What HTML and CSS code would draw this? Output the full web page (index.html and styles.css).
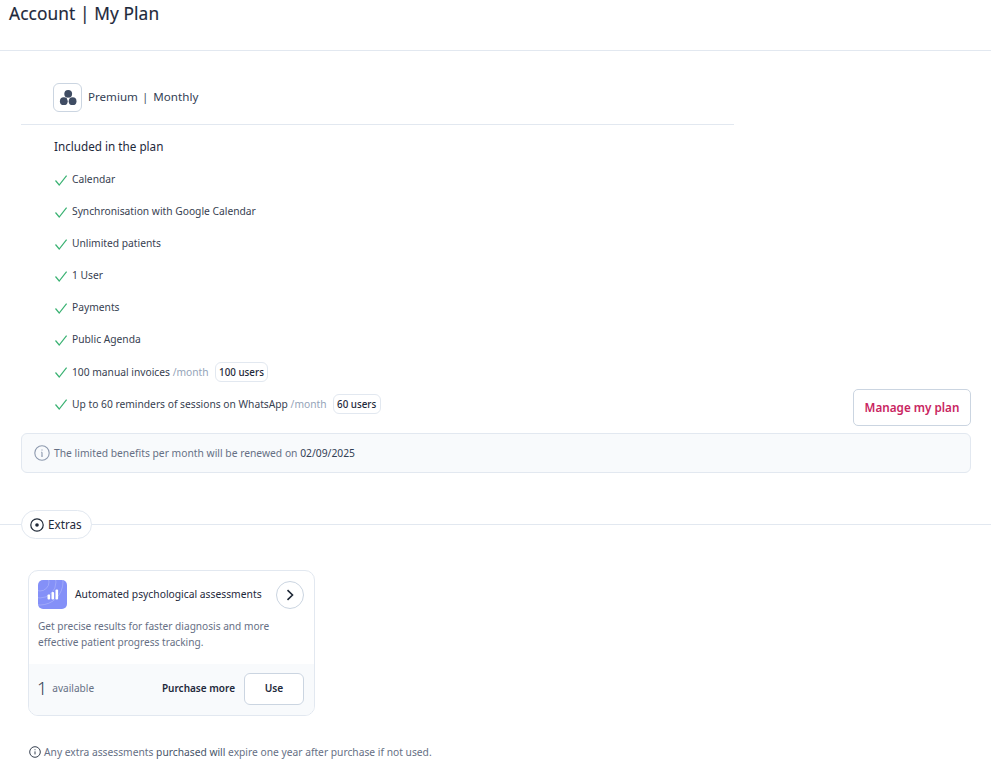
FILE: index.html
```html
<!DOCTYPE html>
<html lang="en">
<head>
<meta charset="utf-8">
<title>Account | My Plan</title>
<link rel="stylesheet" href="styles.css">
</head>
<body>
<header class="page-header"><h1>Account | My Plan</h1></header>
<main class="content">
  <section class="plan">
    <div class="plan-main">
      <div class="plan-head">
        <span class="plan-icon">
          <svg width="18" height="18" viewBox="0 0 18 18"><circle cx="9.2" cy="4.8" r="3.9" fill="#3f4c63"/><circle cx="4.8" cy="12.2" r="3.9" fill="#3f4c63"/><circle cx="13.6" cy="12.2" r="3.9" fill="#3f4c63"/><circle cx="9.2" cy="9.8" r="1.1" fill="#fff"/></svg>
        </span>
        <span class="plan-name">Premium<span class="sep">|</span>Monthly</span>
      </div>
      <h2 class="included">Included in the plan</h2>
      <ul class="features">
        <li class="feature"><svg class="check" width="14" height="14" viewBox="0 0 14 14"><path d="M1.5 7.5 5.2 12 12.6 2.6"/></svg>Calendar</li>
        <li class="feature"><svg class="check" width="14" height="14" viewBox="0 0 14 14"><path d="M1.5 7.5 5.2 12 12.6 2.6"/></svg>Synchronisation with Google Calendar</li>
        <li class="feature"><svg class="check" width="14" height="14" viewBox="0 0 14 14"><path d="M1.5 7.5 5.2 12 12.6 2.6"/></svg>Unlimited patients</li>
        <li class="feature"><svg class="check" width="14" height="14" viewBox="0 0 14 14"><path d="M1.5 7.5 5.2 12 12.6 2.6"/></svg>1 User</li>
        <li class="feature"><svg class="check" width="14" height="14" viewBox="0 0 14 14"><path d="M1.5 7.5 5.2 12 12.6 2.6"/></svg>Payments</li>
        <li class="feature"><svg class="check" width="14" height="14" viewBox="0 0 14 14"><path d="M1.5 7.5 5.2 12 12.6 2.6"/></svg>Public Agenda</li>
        <li class="feature feature-tagged"><svg class="check" width="14" height="14" viewBox="0 0 14 14"><path d="M1.5 7.5 5.2 12 12.6 2.6"/></svg>100 manual invoices <span class="per">/month</span><span class="tag">100 users</span></li>
        <li class="feature feature-tagged"><svg class="check" width="14" height="14" viewBox="0 0 14 14"><path d="M1.5 7.5 5.2 12 12.6 2.6"/></svg>Up to 60 reminders of sessions on WhatsApp <span class="per">/month</span><span class="tag">60 users</span></li>
      </ul>
    </div>
    <button class="manage">Manage my plan</button>
  </section>
  <div class="notice">
    <svg width="16" height="16" viewBox="0 0 16 16" fill="none" stroke="#8d99ae" stroke-width="1.1"><circle cx="8" cy="8" r="7.2"/><path d="M8 7.2v4M7.2 11.2h1.6M7.2 7.2H8M8 4.6v.9"/></svg>
    <span>The limited benefits per month will be renewed on <b class="date">02/09/2025</b></span>
  </div>
  <div class="divider">
    <span class="extras-pill">
      <svg width="14" height="14" viewBox="0 0 14 14" fill="none"><circle cx="7" cy="7" r="6.2" stroke="#1f2937" stroke-width="1.2"/><circle cx="7" cy="7" r="1.8" fill="#1f2937"/></svg>
      <span class="extras-label">Extras</span>
    </span>
  </div>
  <article class="card">
    <div class="card-top">
      <div class="card-title-row">
        <span class="card-icon">
          <svg width="29" height="29" viewBox="0 0 29 29" fill="none"><g stroke="#fff" stroke-opacity=".22"><circle cx="2" cy="2" r="9"/><circle cx="2" cy="2" r="16"/><circle cx="2" cy="2" r="23"/></g><g fill="#fff"><rect x="9.5" y="14.5" width="2.6" height="5" rx="1"/><rect x="13.5" y="12" width="2.6" height="7.5" rx="1"/><rect x="17.5" y="9.5" width="2.6" height="10" rx="1"/></g></svg>
        </span>
        <h3 class="card-title">Automated psychological assessments</h3>
        <button class="round" aria-label="Open"><svg width="10" height="12" viewBox="0 0 10 12" fill="none"><path d="M2.5 1.2 7.5 6 2.5 10.8" stroke="#1f2937" stroke-width="1.6"/></svg></button>
      </div>
      <p class="card-desc">Get precise results for faster diagnosis and more effective patient progress tracking.</p>
    </div>
    <div class="card-foot">
      <span class="count">1</span><span class="avail">available</span>
      <span class="more">Purchase more</span>
      <button class="use">Use</button>
    </div>
  </article>
  <p class="foot-note">
    <svg width="12" height="12" viewBox="0 0 12 12" fill="none" stroke="#374151" stroke-width="1"><circle cx="6" cy="6" r="5.3"/><path d="M6 5.4v3M6 3.3v.9"/></svg>
    <span>Any extra assessments <span class="strong">purchased will</span> expire one year after purchase if not used.</span>
  </p>
</main>
</body>
</html>
```
FILE: styles.css
```css
* { box-sizing: border-box; }
html, body { margin: 0; padding: 0; }
body { font-family: "Noto Sans", sans-serif; color: #1f2937; background: #fff; height: 768px; overflow: hidden; }
button { font-family: inherit; cursor: pointer; }
.page-header { height: 51px; border-bottom: 1px solid #e2e8f0; padding-left: 9px; }
.page-header h1 { margin: 0; font-size: 17.3px; line-height: 27px; font-weight: 400; color: #1e293b; letter-spacing: .1px; -webkit-text-stroke: .15px #1e293b; }
.content { padding: 0 20px 0 21px; }
.plan { display: flex; align-items: flex-end; justify-content: space-between; }
.plan-main { width: 713px; padding-bottom: 13px; }
.plan-head { display: flex; align-items: center; gap: 6px; padding: 32px 0 12px 32px; border-bottom: 1px solid #e2e8f0; box-sizing: content-box; height: 29px; }
.plan-icon { width: 29px; height: 29px; border: 1px solid #cbd5e1; border-radius: 6px; display: flex; align-items: center; justify-content: center; }
.plan-name { font-size: 11.6px; line-height: 14px; padding-bottom: 2px; color: #334155; }
.sep { margin: 0 5px 0 4px; color: #475569; }
.included { margin: 13px 0 0 33px; font-size: 11.7px; line-height: 16px; font-weight: 400; color: #1e293b; }
.features { list-style: none; margin: 10px 0 0 33px; padding: 0; }
.feature { display: flex; align-items: center; height: 32px; padding-bottom: 2px; font-size: 10.25px; color: #374151; white-space: pre; }
.feature-tagged { padding-bottom: 0; }
.check { margin: 2px 4px 0 0; flex: none; fill: none; stroke: #3bb273; stroke-width: 1.2; }
.feature-tagged .check { margin-top: 0; }
.per { color: #94a3b8; }
.tag { margin-left: 6px; padding: 0 3.5px; height: 20px; line-height: 19px; border: 1px solid #e2e8f0; border-radius: 6px; color: #1e293b; font-size: 9.8px; font-weight: 500; }
.manage { width: 118px; height: 37px; margin-bottom: 7px; padding: 0 0 2px; background: #fff; border: 1px solid #cbd5e1; border-radius: 5px; color: #c9245f; font-size: 11.7px; font-weight: 600; }
.notice { display: flex; align-items: center; gap: 4px; height: 40px; padding-left: 12px; background: #f8fafc; border: 1px solid #e2e8f0; border-radius: 6px; font-size: 10.3px; color: #667085; }
.date { font-weight: 400; color: #334155; }
.divider { position: relative; display: flex; align-items: center; height: 29px; margin: 37px -20px 0 -21px; padding-left: 21px; }
.divider::before { content: ""; position: absolute; left: 0; right: 0; top: 14px; border-top: 1px solid #e2e8f0; }
.extras-pill { position: relative; display: flex; align-items: center; gap: 3px; width: 71px; height: 29px; padding-left: 8px; background: #fff; border: 1px solid #e2e8f0; border-radius: 15px; font-size: 11.7px; color: #1e293b; }
.extras-label { margin: 0 0 2px 1px; line-height: 14px; }
.card { width: 287px; height: 146px; margin: 31px 0 0 7px; border: 1px solid #e2e8f0; border-radius: 10px; overflow: hidden; display: flex; flex-direction: column; }
.card-top { flex: 1; padding: 9px 10px 0 9px; }
.card-title-row { display: flex; align-items: center; height: 29px; }
.card-icon { width: 29px; height: 29px; border-radius: 5px; background: #8490f8; overflow: hidden; flex: none; }
.card-icon svg { display: block; }
.card-title { flex: 1; margin: 0 0 2px 8px; font-size: 10.3px; line-height: 14px; font-weight: 400; color: #1e293b; }
.round { width: 28px; height: 28px; border-radius: 50%; border: 1px solid #cbd5e1; background: #fff; display: flex; align-items: center; justify-content: center; padding: 0; }
.card-desc { margin: 9px 0 0; font-size: 10.15px; line-height: 16px; color: #667085; }
.card-foot { display: flex; align-items: center; height: 51px; padding: 0 10px 3px 9px; background: #f8fafc; }
.count { font-size: 18px; font-weight: 300; color: #334155; margin-left: -1px; }
.avail { margin-left: 5px; font-size: 10.1px; color: #667085; }
.more { margin-left: auto; font-size: 10px; font-weight: 600; color: #1e293b; }
.use { width: 60px; height: 32px; margin: 2px 0 0 9px; padding: 0 0 2px; background: #fff; border: 1px solid #cbd5e1; border-radius: 6px; font-size: 10.2px; font-weight: 600; color: #1e293b; }
.foot-note { display: flex; align-items: center; gap: 3px; margin: 29px 0 0 8px; font-size: 10.26px; line-height: 14px; color: #667085; }
.strong { color: #475569; }
```
